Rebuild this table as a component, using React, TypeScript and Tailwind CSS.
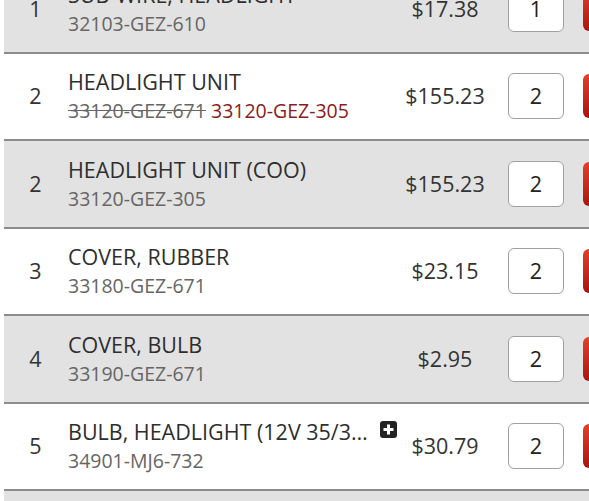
import { FC } from "react";

interface iPart {
  ref: number;
  name: string;
  part: string;
  oldPart?: string;
  price: string;
  qty: number;
  more?: boolean;
}

const parts: Array<iPart> = [
  { ref: 1, name: "SUB-WIRE, HEADLIGHT", part: "32103-GEZ-610", price: "$17.38", qty: 1 },
  { ref: 2, name: "HEADLIGHT UNIT", oldPart: "33120-GEZ-671", part: "33120-GEZ-305", price: "$155.23", qty: 2 },
  { ref: 2, name: "HEADLIGHT UNIT (COO)", part: "33120-GEZ-305", price: "$155.23", qty: 2 },
  { ref: 3, name: "COVER, RUBBER", part: "33180-GEZ-671", price: "$23.15", qty: 2 },
  { ref: 4, name: "COVER, BULB", part: "33190-GEZ-671", price: "$2.95", qty: 2 },
  { ref: 5, name: "BULB, HEADLIGHT (12V 35/3…", part: "34901-MJ6-732", price: "$30.79", qty: 2, more: true },
];

const PlusBox: FC = () => (
  <svg width="17" height="17" viewBox="0 0 17 17" className="shrink-0 mt-[4px]">
    <rect x="0" y="0" width="17" height="17" rx="3" fill="#222" />
    <rect x="3.5" y="7" width="10" height="3" fill="#fff" />
    <rect x="7" y="3.5" width="3" height="10" fill="#fff" />
  </svg>
);

const Row: FC<{ item: iPart; shaded: boolean }> = ({ item, shaded }) => (
  <div
    className={`flex items-center w-[619px] h-[87.5px] border-b-2 border-[#8c8c8c] ${
      shaded ? "bg-[#e2e2e2]" : "bg-white"
    }`}
  >
    <div className="w-[63px] shrink-0 text-center text-[21.5px] text-[#333]">{item.ref}</div>
    <div className="flex-1 min-w-0 flex items-start gap-[12px] pl-[1px] pr-[2px]">
      <div className="flex-1 min-w-0">
        <p className="whitespace-nowrap text-[21.5px] leading-[29px] text-[#2e2e2e]">{item.name}</p>
        <p className="text-[19.5px] leading-[29px] text-[#666] whitespace-nowrap">
          {item.oldPart && <span className="line-through">{item.oldPart}</span>}
          {item.oldPart && " "}
          <span className={item.oldPart ? "text-[#8b1c1c]" : ""}>{item.part}</span>
        </p>
      </div>
      {item.more && <PlusBox />}
    </div>
    <div className="w-[92px] shrink-0 text-center text-[21.5px] text-[#333]">{item.price}</div>
    <div className="ml-[17px] w-[56px] h-[46px] shrink-0 flex items-center justify-center rounded-[6px] border-[1.5px] border-[#a0a0a0] bg-white text-[21.5px] text-[#222]">
      {item.qty}
    </div>
    <div className="ml-[19px] w-[40px] h-[44px] shrink-0 rounded-[6px] bg-gradient-to-b from-[#e2402c] to-[#a8140e]" />
  </div>
);

const App: FC = () => {
  return (
    <div
      className="w-[589px] h-[501px] overflow-hidden bg-white"
      style={{ fontFamily: '"Open Sans", "Noto Sans", sans-serif' }}
    >
      <div className="ml-[4px] mt-[-34px]">
        {parts.map((el, i) => (
          <Row key={i} item={el} shaded={i % 2 === 0} />
        ))}
        <div className="w-[619px] h-[87.5px] bg-[#e2e2e2]" />
      </div>
    </div>
  );
};

export default App;
